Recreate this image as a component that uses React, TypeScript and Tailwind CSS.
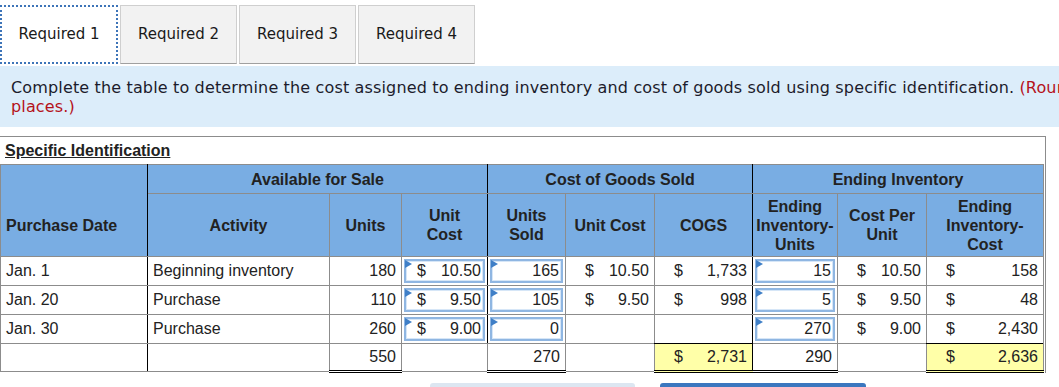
import React from "react";

const GRAY = "border-[#8c8c8c]";

type Cell = {
  text?: string;
  dollar?: string;
  input?: boolean;
  align?: "left" | "right";
  total?: boolean;
  dbl?: boolean;
  rightBlack?: boolean;
};

function Marker() {
  return (
    <span className="absolute left-[-1px] top-[-1px] h-0 w-0 border-y-[4px] border-l-[7px] border-y-transparent border-l-[#3f7fc7]" />
  );
}

function Value({ c }: { c: Cell }) {
  return (
    <div className="flex h-full items-center justify-between">
      <span>{c.dollar ?? ""}</span>
      <span>{c.text ?? ""}</span>
    </div>
  );
}

function DataCell({ c }: { c: Cell }) {
  const right = c.rightBlack ? "border-r-black" : "";
  const bottom = c.dbl ? "border-b-[3px] border-b-black border-double" : "";
  const bg = c.total ? "bg-[#ffffa8] border-t-black" : "";
  if (c.input) {
    return (
      <td className={`border ${GRAY} ${right} ${bottom} p-[2px]`}>
        <div className="relative h-[24px] border-2 border-[#8fb6e2] pr-[2px] pl-[11px] shadow-[inset_0_0_0_1px_#d6e6f7]">
          <Marker />
          <Value c={c} />
        </div>
      </td>
    );
  }
  if (c.dollar !== undefined) {
    return (
      <td className={`border ${GRAY} ${right} ${bottom} ${bg} h-[28px] pr-[5px] pl-[19px]`}>
        <Value c={c} />
      </td>
    );
  }
  return (
    <td
      className={`border ${GRAY} ${right} ${bottom} ${bg} h-[28px] px-[5px] ${
        c.align === "right" ? "text-right" : "text-left"
      }`}
    >
      {c.text}
    </td>
  );
}

const rows: Cell[][] = [
  [
    { text: "Jan. 1", rightBlack: true },
    { text: "Beginning inventory" },
    { text: "180", align: "right" },
    { input: true, dollar: "$", text: "10.50", rightBlack: true },
    { input: true, text: "165" },
    { dollar: "$", text: "10.50" },
    { dollar: "$", text: "1,733", rightBlack: true },
    { input: true, text: "15" },
    { dollar: "$", text: "10.50" },
    { dollar: "$", text: "158" },
  ],
  [
    { text: "Jan. 20", rightBlack: true },
    { text: "Purchase" },
    { text: "110", align: "right" },
    { input: true, dollar: "$", text: "9.50", rightBlack: true },
    { input: true, text: "105" },
    { dollar: "$", text: "9.50" },
    { dollar: "$", text: "998", rightBlack: true },
    { input: true, text: "5" },
    { dollar: "$", text: "9.50" },
    { dollar: "$", text: "48" },
  ],
  [
    { text: "Jan. 30", rightBlack: true },
    { text: "Purchase" },
    { text: "260", align: "right" },
    { input: true, dollar: "$", text: "9.00", rightBlack: true },
    { input: true, text: "0" },
    { text: "" },
    { text: "", rightBlack: true },
    { input: true, text: "270" },
    { dollar: "$", text: "9.00" },
    { dollar: "$", text: "2,430" },
  ],
  [
    { text: "", rightBlack: true },
    { text: "" },
    { text: "550", align: "right", dbl: true },
    { text: "", rightBlack: true },
    { text: "270", align: "right", dbl: true },
    { text: "" },
    { dollar: "$", text: "2,731", total: true, dbl: true, rightBlack: true },
    { text: "290", align: "right", dbl: true },
    { text: "" },
    { dollar: "$", text: "2,636", total: true, dbl: true },
  ],
];

const widths = [147, 182, 72, 86, 78, 89, 98, 85, 89, 117];

export default function App() {
  const th = `border ${GRAY} font-bold text-center align-middle leading-[19px]`;
  return (
    <div className="w-[1059px] h-[387px] overflow-hidden bg-white text-[#222] font-['Liberation_Sans',Arial,sans-serif]">
      {/* Tab strip */}
      <div className="flex pt-[5px] font-['DejaVu_Sans',Verdana,sans-serif] text-[15px] text-[#1a1a1a]">
        <div className="flex h-[59px] w-[118px] items-center justify-center border-2 border-dotted border-[#3d74b8] bg-white">
          Required 1
        </div>
        {["Required 2", "Required 3", "Required 4"].map((t) => (
          <div
            key={t}
            className="ml-[2px] flex h-[59px] w-[117px] items-center justify-center border border-[#cfcfcf] border-b-[#a0a0a0] bg-[#f2f2f2]"
          >
            {t}
          </div>
        ))}
      </div>

      {/* Instructions */}
      <div className="mt-[2px] h-[61px] bg-[#dcedfa] px-[11px] pt-[12px] font-['DejaVu_Sans',Verdana,sans-serif] text-[16px] leading-[19px] tracking-[0.15px] text-[#1c1c2c] whitespace-nowrap">
        Complete the table to determine the cost assigned to ending inventory and cost of goods sold using specific identification.{" "}
        <span className="text-[#b5121b]">(Round your answers to 2 decimal</span>
        <br />
        <span className="text-[#b5121b]">places.)</span>
      </div>

      {/* Worksheet */}
      <div className="mt-[9px] w-[1046px] border-t border-r border-[#8c8c8c]">
        <div className="h-[27px] pl-[5px] pt-[4px] text-[16px] leading-[19px] font-bold underline">Specific Identification</div>
        <table className="table-fixed border-collapse text-[16px]" style={{ width: 1043 }}>
          <colgroup>
            {widths.map((w, i) => (
              <col key={i} style={{ width: w }} />
            ))}
          </colgroup>
          <thead className="bg-[#79ade3]">
            <tr className="h-[29px]">
              <th className={`${th} border-r-black border-b-transparent`} />
              <th className={`${th} border-r-black`} colSpan={3}>
                Available for Sale
              </th>
              <th className={`${th} border-r-black`} colSpan={3}>
                Cost of Goods Sold
              </th>
              <th className={th} colSpan={3}>
                Ending Inventory
              </th>
            </tr>
            <tr className="h-[63px]">
              <th className={`${th} border-r-black border-t-transparent text-left pl-[5px]`}>Purchase Date</th>
              <th className={th}>Activity</th>
              <th className={th}>Units</th>
              <th className={`${th} border-r-black`}>
                Unit
                <br />
                Cost
              </th>
              <th className={th}>
                Units
                <br />
                Sold
              </th>
              <th className={th}>Unit Cost</th>
              <th className={`${th} border-r-black`}>COGS</th>
              <th className={th}>
                Ending
                <br />
                Inventory-
                <br />
                Units
              </th>
              <th className={th}>
                Cost Per
                <br />
                Unit
              </th>
              <th className={th}>
                Ending
                <br />
                Inventory-
                <br />
                Cost
              </th>
            </tr>
          </thead>
          <tbody>
            {rows.map((r, i) => (
              <tr key={i}>
                {r.map((c, j) => (
                  <DataCell key={j} c={c} />
                ))}
              </tr>
            ))}
          </tbody>
        </table>
      </div>

      {/* Action buttons */}
      <div className="mt-[10px] flex gap-[25px] pl-[430px]">
        <div className="h-[36px] w-[205px] rounded-[3px] bg-[#dce6f1]" />
        <div className="h-[36px] w-[206px] rounded-[3px] bg-[#3b77bf]" />
      </div>
    </div>
  );
}
